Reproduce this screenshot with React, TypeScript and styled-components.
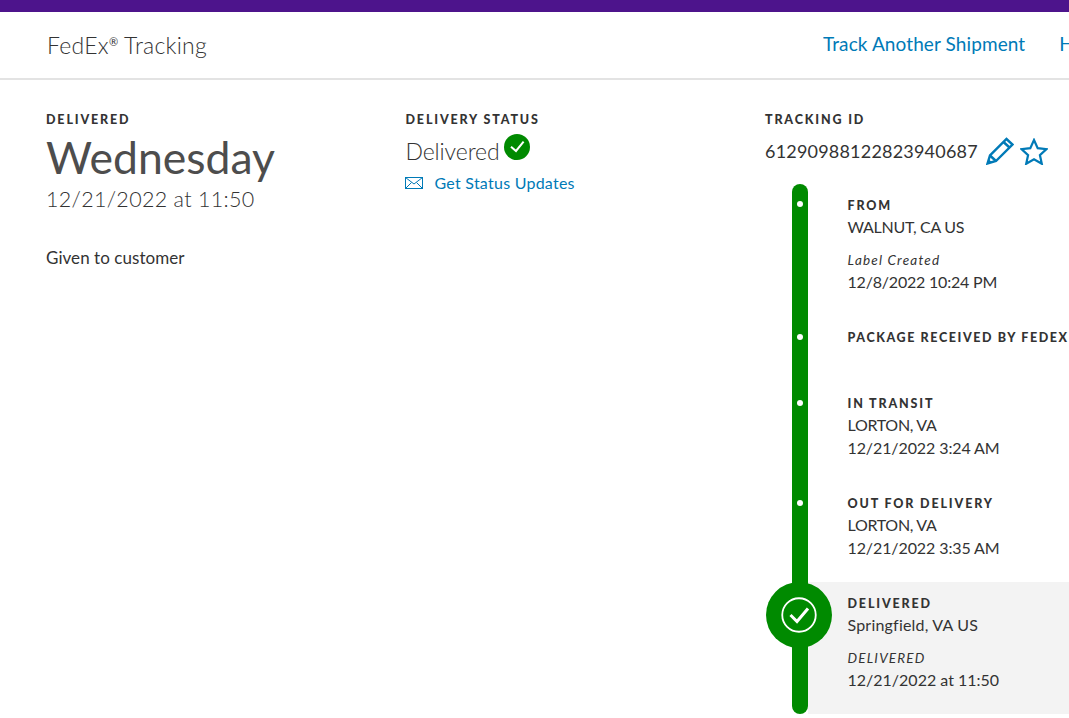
import React from "react";
import styled, { createGlobalStyle } from "styled-components";

const Global = createGlobalStyle`
  html, body { margin: 0; padding: 0; background: #fff; height: 718px; overflow: hidden; }
  body { font-family: "Lato", "Liberation Sans", sans-serif; color: #333; }
  * { box-sizing: border-box; }
`;
const Page = styled.div`width: 1069px; height: 718px; overflow: hidden;`;
const TopBar = styled.div`height: 12px; background: #4d148c;`;
const Header = styled.header`
  height: 68px; border-bottom: 2px solid #e3e3e3; display: flex; align-items: center;
  justify-content: space-between; padding-left: 47px; white-space: nowrap;
`;
const Title = styled.div`font-size: 23px; font-weight: 300; color: #333; letter-spacing: 0.25px; sup { font-size: 11px; font-weight: 400; line-height: 0; vertical-align: 8px; }`;
const Nav = styled.nav`display: flex; gap: 34px; width: 246px; flex: none; overflow: hidden; margin-top: -3px; font-size: 19px; color: #007ab7; a { flex: none; letter-spacing: 0.1px; }`;
const Columns = styled.main`display: grid; grid-template-columns: 359.5px 359.5px 1fr; padding: 32px 0 0 46px;`;
const Col = styled.section`min-width: 0;`;
const Label = styled.div<{ $ls?: number }>`font-size: 12.5px; line-height: 16px; font-weight: 900; letter-spacing: ${p => p.$ls ?? 1.85}px; color: #333; text-transform: uppercase; white-space: nowrap;`;
const Day = styled.div`font-size: 44.5px; line-height: 52px; font-weight: 400; color: #4d4d4d; margin-top: 3px;`;
const DateLine = styled.div`font-size: 21.5px; line-height: 28px; font-weight: 300; letter-spacing: 0.3px; color: #333; margin-top: 2px;`;
const Given = styled.div`font-size: 17px; line-height: 22px; margin-top: 34px; letter-spacing: 0.05px; color: #333;`;
const StatusRow = styled.div`display: flex; align-items: center; gap: 4px; height: 32px; margin-top: 7px; font-size: 23px; font-weight: 300; letter-spacing: -0.1px; color: #333; svg { margin-top: -9px; }`;
const UpdateLink = styled.div`display: flex; align-items: center; gap: 12px; margin-left: -1px; color: #007ab7; font-size: 16px; letter-spacing: 0.25px; margin-top: 6px; line-height: 20px;`;
const IdRow = styled.div`display: flex; align-items: center; height: 30px; margin-top: 8px; font-size: 18px; color: #333; letter-spacing: 0.2px; white-space: nowrap;`;
const IconBtn = styled.span<{ $gap: number }>`display: inline-flex; margin-left: ${p => p.$gap}px;`;
const Timeline = styled.div`position: relative; margin-top: 18px; width: 304px; height: 530px;`;
const Rail = styled.div`position: absolute; left: 27px; top: 0; bottom: 0; width: 16px; border-radius: 8px; background: #008a00; z-index: 2;`;
const Row = styled.div<{ $h: number; $pt: number; $active?: boolean }>`
  position: relative; height: ${p => p.$h}px; padding: ${p => p.$pt}px 0 0 82.5px;
  ${p => p.$active ? "background: linear-gradient(to right, transparent 43px, #f3f3f3 43px);" : ""}
`;
const Dot = styled.i<{ $top: number }>`position: absolute; left: 32px; top: ${p => p.$top}px; width: 6px; height: 6px; border-radius: 50%; background: #fff; z-index: 3;`;
const Big = styled.div`position: absolute; left: 1px; top: 0; width: 66px; height: 66px; border-radius: 50%; background: #008a00; z-index: 3; display: flex; align-items: center; justify-content: center;`;
const Value = styled.div<{ $ls?: number; $mt?: number }>`font-size: 16px; line-height: 22px; margin-top: ${p => p.$mt || 0}px; letter-spacing: ${p => p.$ls || 0}px; color: #333; white-space: nowrap;`;
const Note = styled.div`font-size: 13.5px; font-weight: 400; font-style: italic; letter-spacing: 1.2px; line-height: 18px; margin-top: 13px; color: #333;`;

const Check = () => (
  <svg width="26" height="26" viewBox="0 0 26 26"><circle cx="13" cy="13" r="13" fill="#008a00"/><path d="M8 13.700l5 4.300 7.600-9.300" transform="translate(-1 -1)" fill="none" stroke="#fff" strokeWidth="2"/></svg>
);
const Mail = () => (
  <svg width="18" height="12" viewBox="0 0 18 12" fill="none" stroke="#007ab7"><rect x=".5" y=".5" width="17" height="11"/><path d="M.5.5L9 7l8.500-6.500M.5 11.500L6.500 5.500M17.500 11.500l-6-6"/></svg>
);
const Pencil = () => (
  <svg width="28" height="28" viewBox="0 0 28 28" fill="none" stroke="#007ab7" strokeWidth="2.400"><path d="M1.500 26.500l2.500-8L20.500 2l6 5.500L10 24z"/><path d="M4 18.500l6 5.500M17.500 5l6 5.500"/><path d="M1 27l1.500-5 3.500 3.200z" fill="#007ab7" stroke="none"/></svg>
);
const Star = () => (
  <svg width="28" height="27" viewBox="0 0 28 27" fill="none" stroke="#007ab7" strokeWidth="2.200"><path d="M14 2l3.700 8.200 8.800.9-6.600 6 1.900 8.700L14 21.300l-7.800 4.500 1.900-8.700-6.600-6 8.800-.9z"/></svg>
);
const BigCheck = () => (
  <svg width="36" height="36" viewBox="0 0 36 36" fill="none" stroke="#fff"><circle cx="18" cy="18" r="16.750" strokeWidth="1.800"/><path d="M9.500 18l6.500 6.500 11-13" strokeWidth="3"/></svg>
);

export default function App() {
  return (
    <Page>
      <Global />
      <TopBar />
      <Header>
        <Title>FedEx<sup>®</sup> Tracking</Title>
        <Nav><a>Track Another Shipment</a><a>Help</a></Nav>
      </Header>
      <Columns>
        <Col>
          <Label>Delivered</Label>
          <Day>Wednesday</Day>
          <DateLine>12/21/2022 at 11:50</DateLine>
          <Given>Given to customer</Given>
        </Col>
        <Col>
          <Label>Delivery Status</Label>
          <StatusRow>Delivered <Check /></StatusRow>
          <UpdateLink><Mail />Get Status Updates</UpdateLink>
        </Col>
        <Col>
          <Label>Tracking ID</Label>
          <IdRow>
            61290988122823940687
            <IconBtn $gap={8}><Pencil /></IconBtn>
            <IconBtn $gap={6}><Star /></IconBtn>
          </IdRow>
          <Timeline>
            <Rail />
            <Row $h={146} $pt={14}>
              <Dot $top={17} />
              <Label>From</Label>
              <Value $mt={2} $ls={-0.3}>WALNUT, CA US</Value>
              <Note>Label Created</Note>
              <Value $mt={2} $ls={-0.2}>12/8/2022 10:24 PM</Value>
            </Row>
            <Row $h={66} $pt={0}>
              <Dot $top={4} />
              <Label $ls={1.6}>Package received by FedEx</Label>
            </Row>
            <Row $h={100} $pt={0}>
              <Dot $top={4} />
              <Label>In transit</Label>
              <Value $mt={2} $ls={-0.3}>LORTON, VA</Value>
              <Value $mt={1} $ls={-0.1}>12/21/2022 3:24 AM</Value>
            </Row>
            <Row $h={86} $pt={0}>
              <Dot $top={4} />
              <Label>Out for delivery</Label>
              <Value $mt={2} $ls={-0.3}>LORTON, VA</Value>
              <Value $mt={1} $ls={-0.1}>12/21/2022 3:35 AM</Value>
            </Row>
            <Row $h={132} $pt={14} $active>
              <Big><BigCheck /></Big>
              <Label>Delivered</Label>
              <Value $mt={2} $ls={0.2}>Springfield, VA US</Value>
              <Note>DELIVERED</Note>
              <Value $mt={2}>12/21/2022 at 11:50</Value>
            </Row>
          </Timeline>
        </Col>
      </Columns>
    </Page>
  );
}
